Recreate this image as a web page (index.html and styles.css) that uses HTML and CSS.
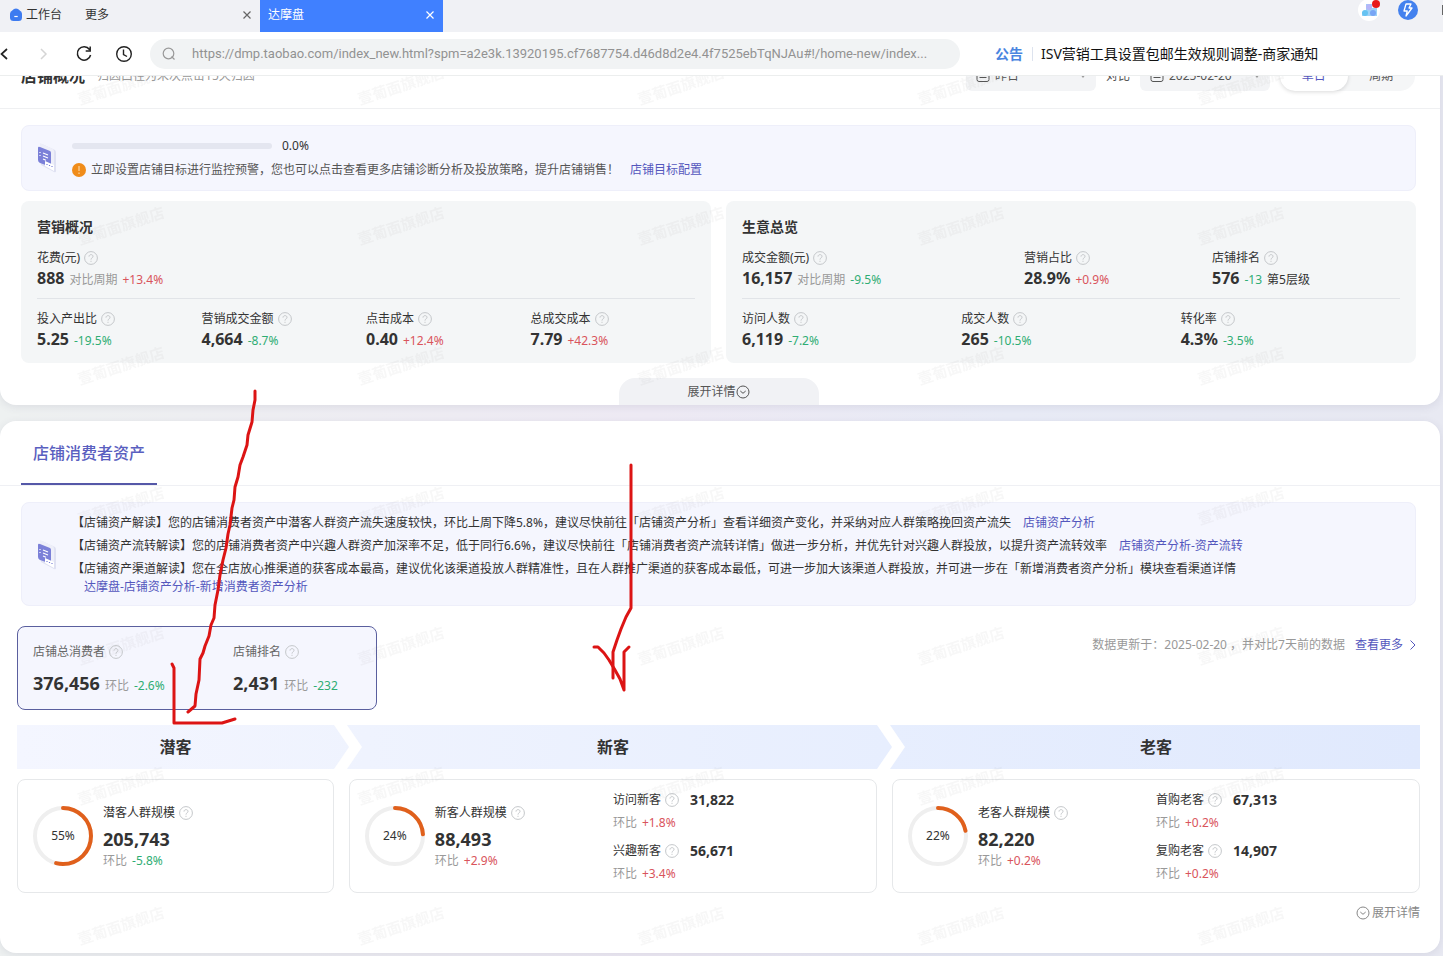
FILE: index.html
```html
<!DOCTYPE html>
<html lang="zh-CN">
<head>
<meta charset="utf-8">
<title>达摩盘</title>
<link rel="stylesheet" href="styles.css">
</head>
<body>
<svg class="defs" aria-hidden="true">
  <symbol id="help" viewBox="0 0 14 14"><circle cx="7" cy="7" r="6.4" fill="none" stroke="currentColor"/><path d="M5 5.6C5 3 9 3 9 5.4C9 6.9 7 6.8 7 8.6M7 9.8v1.1" fill="none" stroke="currentColor"/></symbol>
  <symbol id="down" viewBox="0 0 14 14"><circle cx="7" cy="7" r="6" fill="none" stroke="currentColor"/><path d="M4.3 6l2.7 2.3L9.700 6" fill="none" stroke="currentColor"/></symbol>
  <symbol id="close" viewBox="0 0 10 10"><path d="M1.500 1.500l7 7M8.500 1.500l-7 7" fill="none" stroke="currentColor" stroke-width="1.200"/></symbol>
  <symbol id="calendar" viewBox="0 0 14 14"><rect x="1" y="2" width="12" height="10.500" rx="2" fill="none" stroke="currentColor"/><path d="M3.500 5.500h7M3.500 8.500h7" stroke="currentColor"/></symbol>
  <symbol id="note" viewBox="0 0 20 30">
    <path d="M5 1L18 7Q19 8 19 10V28Q19 30 17 29L4 22Z" fill="#dfe1f2"/>
    <path d="M3 0L16 6Q17 7 17 9V26L3 20Z" fill="#eeeff9"/>
    <path d="M1 5Q1 3 3 4L13 8Q14 8.500 14 10V24L3 20Q1 19 1 17Z" fill="#7b80d8"/>
    <path d="M6 10l5 2M6 13l5 2M6 16l3 1.200M3 9v1M3 12v1" stroke="#fff" stroke-width="1.200" fill="none"/>
    <path d="M8 18L17 22V28L8 23Z" fill="#fff"/>
    <path d="M10 21v1M12.500 22v1M15 23v1" stroke="#7b80d8" stroke-width="1.200"/>
  </symbol>
</svg>

<header class="tabbar">
  <button class="home" type="button">
    <svg width="14" height="14" viewBox="0 0 14 14"><path d="M5 1Q7-.2 9 1L12 3.500Q13 4.500 13 6V9.500Q13 13 9.500 13H4.500Q1 13 1 9.500V6Q1 4.500 2 3.500Z" fill="#3d7bf0"/><path d="M5.300 8.500h3.400" stroke="#fff" stroke-width="1.200"/></svg>
    <span>工作台</span>
  </button>
  <div class="tab"><span>更多</span><button type="button" aria-label="关闭更多"><svg width="10" height="10"><use href="#close"/></svg></button></div>
  <div class="tab active"><span>达摩盘</span><button type="button" aria-label="关闭达摩盘"><svg width="10" height="10"><use href="#close"/></svg></button></div>
  <div class="tools">
    <button type="button" aria-label="应用"><svg width="22" height="24" viewBox="0 0 22 24"><circle cx="11" cy="10" r="11" fill="#fff"/><path d="M8 4h6v4h5v8H4v-4h4z" fill="#9ed2f7"/><circle cx="7" cy="13" r="3" fill="#66c3f2"/><circle cx="15" cy="13" r="3" fill="#78a5f5"/><circle cx="11" cy="7" r="3" fill="#b5b6f8"/><circle cx="18" cy="4" r="4" fill="#e81b1b"/></svg></button>
    <button type="button" aria-label="加速"><svg width="20" height="20" viewBox="0 0 20 20"><circle cx="10" cy="10" r="10" fill="#4381ee"/><path d="M8 4h5l-2 4h3l-6 8 1.200-5H6z" fill="none" stroke="#fff" stroke-width="1.300" stroke-linejoin="round"/></svg></button>
    <span class="window-edge"></span>
  </div>
</header>

<nav class="navbar">
  <div class="nav-buttons">
    <button type="button" aria-label="后退"><svg width="16" height="18" viewBox="0 0 16 18"><path d="M7 4L1.500 9L7 14" fill="none" stroke="#222" stroke-width="1.700"/></svg></button>
    <button type="button" aria-label="前进"><svg width="16" height="18" viewBox="0 0 16 18"><path d="M5 4l5 5-5 5" fill="none" stroke="#d5d5d5" stroke-width="1.500"/></svg></button>
    <button type="button" aria-label="刷新"><svg width="16" height="18" viewBox="0 0 16 18"><path d="M13.500 4.500A6.700 6.700 0 1 0 14.600 10M14.200 1.500V6H9.700" fill="none" stroke="#222" stroke-width="1.500"/></svg></button>
    <button type="button" aria-label="历史"><svg width="16" height="18" viewBox="0 0 16 18"><circle cx="8" cy="9" r="7.300" fill="none" stroke="#222" stroke-width="1.400"/><path d="M7.500 4.500V9.500L11 11.500" fill="none" stroke="#222" stroke-width="1.400"/></svg></button>
  </div>
  <label class="address">
    <svg width="14" height="14" viewBox="0 0 14 14"><circle cx="6.500" cy="6.500" r="5.300" fill="none" stroke="#999" stroke-width="1.200"/><path d="M9.500 9.500l3 3" stroke="#999" stroke-width="1.200"/></svg>
    <input type="text" aria-label="地址" value="https://dmp.taobao.com/index_new.html?spm=a2e3k.13920195.cf7687754.d46d8d2e4.4f7525ebTqNJAu#!/home-new/index...">
  </label>
  <div class="notice"><strong>公告</strong><a href="#">ISV营销工具设置包邮生效规则调整-商家通知</a></div>
</nav>

<main class="page">
  <section class="card overview">
    <div class="overview-head">
      <h2>店铺概况</h2>
      <span class="sub">归因口径为末次点击15天归因</span>
      <div class="filters">
        <label class="picker"><svg width="14" height="14"><use href="#calendar"/></svg><select aria-label="日期"><option>昨日</option></select><svg width="6" height="4" viewBox="0 0 6 4"><path d="M0 0h6L3 4z" fill="#999"/></svg></label>
        <span>对比</span>
        <label class="picker"><svg width="14" height="14"><use href="#calendar"/></svg><input type="text" aria-label="对比日期" value="2025-02-20"><svg width="6" height="4" viewBox="0 0 6 4"><path d="M0 0h6L3 4z" fill="#999"/></svg></label>
        <div class="segmented"><button type="button" class="on">单日</button><button type="button">周期</button></div>
      </div>
    </div>
    <div class="overview-body">
      <div class="tip">
        <svg class="note" width="20" height="30"><use href="#note"/></svg>
        <div class="goal">
          <div class="goal-bar"><span class="track"></span><span>0.0%</span></div>
          <p><svg width="14" height="14" viewBox="0 0 14 14"><circle cx="7" cy="7" r="7" fill="#f08c1a"/><path d="M7 3v5M7 9.500v1.500" stroke="#fbd5a0" stroke-width="1.200"/></svg><span>立即设置店铺目标进行监控预警，您也可以点击查看更多店铺诊断分析及投放策略，提升店铺销售！</span><a href="#">店铺目标配置</a></p>
        </div>
      </div>
      <div class="panels">
        <article class="panel">
          <h3>营销概况</h3>
          <div class="row upper one">
            <div><div class="label">花费(元)<svg class="help"><use href="#help"/></svg></div><div class="value"><b>888</b><i>对比周期</i><em class="up">+13.4%</em></div></div>
          </div>
          <div class="row four">
            <div><div class="label">投入产出比<svg class="help"><use href="#help"/></svg></div><div class="value"><b>5.25</b><em class="down">-19.5%</em></div></div>
            <div><div class="label">营销成交金额<svg class="help"><use href="#help"/></svg></div><div class="value"><b>4,664</b><em class="down">-8.7%</em></div></div>
            <div><div class="label">点击成本<svg class="help"><use href="#help"/></svg></div><div class="value"><b>0.40</b><em class="up">+12.4%</em></div></div>
            <div><div class="label">总成交成本<svg class="help"><use href="#help"/></svg></div><div class="value"><b>7.79</b><em class="up">+42.3%</em></div></div>
          </div>
        </article>
        <article class="panel">
          <h3>生意总览</h3>
          <div class="row upper wide-first">
            <div><div class="label">成交金额(元)<svg class="help"><use href="#help"/></svg></div><div class="value"><b>16,157</b><i>对比周期</i><em class="down">-9.5%</em></div></div>
            <div><div class="label">营销占比<svg class="help"><use href="#help"/></svg></div><div class="value"><b>28.9%</b><em class="up">+0.9%</em></div></div>
            <div><div class="label">店铺排名<svg class="help"><use href="#help"/></svg></div><div class="value"><b>576</b><em class="down">-13</em><span>第5层级</span></div></div>
          </div>
          <div class="row three">
            <div><div class="label">访问人数<svg class="help"><use href="#help"/></svg></div><div class="value"><b>6,119</b><em class="down">-7.2%</em></div></div>
            <div><div class="label">成交人数<svg class="help"><use href="#help"/></svg></div><div class="value"><b>265</b><em class="down">-10.5%</em></div></div>
            <div><div class="label">转化率<svg class="help"><use href="#help"/></svg></div><div class="value"><b>4.3%</b><em class="down">-3.5%</em></div></div>
          </div>
        </article>
      </div>
      <button class="expand" type="button">展开详情<svg width="14" height="14"><use href="#down"/></svg></button>
    </div>
  </section>

  <section class="card assets">
    <div class="assets-tabs"><button type="button">店铺消费者资产</button></div>
    <div class="tip insight">
      <svg class="note" width="20" height="30"><use href="#note"/></svg>
      <div class="insight-text">
        <p>【店铺资产解读】您的店铺消费者资产中潜客人群资产流失速度较快，环比上周下降5.8%，建议尽快前往「店铺资产分析」查看详细资产变化，并采纳对应人群策略挽回资产流失<a href="#">店铺资产分析</a></p>
        <p>【店铺资产流转解读】您的店铺消费者资产中兴趣人群资产加深率不足，低于同行6.6%，建议尽快前往「店铺消费者资产流转详情」做进一步分析，并优先针对兴趣人群投放，以提升资产流转效率<a href="#">店铺资产分析-资产流转</a></p>
        <p>【店铺资产渠道解读】您在全店放心推渠道的获客成本最高，建议优化该渠道投放人群精准性，且在人群推广渠道的获客成本最低，可进一步加大该渠道人群投放，并可进一步在「新增消费者资产分析」模块查看渠道详情<a href="#">达摩盘-店铺资产分析-新增消费者资产分析</a></p>
      </div>
    </div>
    <div class="summary">
      <div class="total">
        <div><div class="label">店铺总消费者<svg class="help"><use href="#help"/></svg></div><div class="value"><b>376,456</b><i>环比</i><em class="down">-2.6%</em></div></div>
        <div><div class="label">店铺排名<svg class="help"><use href="#help"/></svg></div><div class="value"><b>2,431</b><i>环比</i><em class="down">-232</em></div></div>
      </div>
      <div class="updated"><span>数据更新于：2025-02-20 ，并对比7天前的数据</span><a href="#">查看更多<svg width="8" height="12" viewBox="0 0 8 12"><path d="M1.500 1.500L6 6l-4.500 4.500" fill="none" stroke="currentColor"/></svg></a></div>
    </div>
    <div class="stages">
      <h3>潜客</h3>
      <h3><svg class="chevron" viewBox="0 0 28 44"><path d="M0 0H13L28 22L13 44H0L15 22Z" fill="#fff"/></svg>新客</h3>
      <h3><svg class="chevron" viewBox="0 0 28 44"><path d="M0 0H13L28 22L13 44H0L15 22Z" fill="#fff"/></svg>老客</h3>
    </div>
    <div class="groups">
      <article class="group">
        <div class="main-stat">
          <div class="ring"><svg viewBox="0 0 60 60"><circle cx="30" cy="30" r="28"/><circle class="arc" cx="30" cy="30" r="28" pathLength="100" stroke-dasharray="54 100"/></svg><span>55%</span></div>
          <div><div class="label">潜客人群规模<svg class="help"><use href="#help"/></svg></div><b>205,743</b><div class="ratio"><i>环比</i><em class="down">-5.8%</em></div></div>
        </div>
      </article>
      <article class="group">
        <div class="main-stat">
          <div class="ring"><svg viewBox="0 0 60 60"><circle cx="30" cy="30" r="28"/><circle class="arc" cx="30" cy="30" r="28" pathLength="100" stroke-dasharray="24 100"/></svg><span>24%</span></div>
          <div><div class="label">新客人群规模<svg class="help"><use href="#help"/></svg></div><b>88,493</b><div class="ratio"><i>环比</i><em class="up">+2.9%</em></div></div>
        </div>
        <div class="detail">
          <div><div class="label">访问新客<svg class="help"><use href="#help"/></svg><b>31,822</b></div><div class="ratio"><i>环比</i><em class="up">+1.8%</em></div></div>
          <div><div class="label">兴趣新客<svg class="help"><use href="#help"/></svg><b>56,671</b></div><div class="ratio"><i>环比</i><em class="up">+3.4%</em></div></div>
        </div>
      </article>
      <article class="group">
        <div class="main-stat">
          <div class="ring"><svg viewBox="0 0 60 60"><circle cx="30" cy="30" r="28"/><circle class="arc" cx="30" cy="30" r="28" pathLength="100" stroke-dasharray="22 100"/></svg><span>22%</span></div>
          <div><div class="label">老客人群规模<svg class="help"><use href="#help"/></svg></div><b>82,220</b><div class="ratio"><i>环比</i><em class="up">+0.2%</em></div></div>
        </div>
        <div class="detail">
          <div><div class="label">首购老客<svg class="help"><use href="#help"/></svg><b>67,313</b></div><div class="ratio"><i>环比</i><em class="up">+0.2%</em></div></div>
          <div><div class="label">复购老客<svg class="help"><use href="#help"/></svg><b>14,907</b></div><div class="ratio"><i>环比</i><em class="up">+0.2%</em></div></div>
        </div>
      </article>
    </div>
    <button class="more" type="button"><svg width="14" height="14"><use href="#down"/></svg>展开详情</button>
  </section>

  <svg class="watermark" aria-hidden="true">
    <defs><pattern id="wm" y="-20" width="280" height="140" patternUnits="userSpaceOnUse"><text x="80" y="49" transform="rotate(-18 80 49)">壹葡面旗舰店</text></pattern></defs>
    <rect width="100%" height="100%" fill="url(#wm)"/>
  </svg>
</main>

<svg class="marks" width="760" height="760" viewBox="0 0 760 760" aria-hidden="true">
  <path d="M255 391L255 400L253 410L252 422L248 435L247 445L243 457L240 465L238 477L235 487L234 500L232 508L230 525L228 534L226 548L223 560L220 575L218 590L215 605L214 618L211 625L209 636L205 646L203 653L200 659L199 680L196 694L195 706L188 712"/>
  <path d="M172 664L174 668V723H222L235 719"/>
  <path d="M631 465V608L626 617L621 629L617 640L613 652V678"/>
  <path d="M594 647L598 647L604 653L609 660L615 670L620 679L624 690V652L629 647"/>
</svg>
</body>
</html>
```
FILE: styles.css
```css
* { box-sizing: border-box; }
body {
  margin: 0;
  height: 100vh;
  display: flex;
  flex-direction: column;
  overflow: hidden;
  position: relative;
  font: 12px/20px "Noto Sans", "Noto Sans CJK SC", sans-serif;
  color: #333;
  background: #fff;
}
h2, h3, p { margin: 0; }
button, input, select { font: inherit; color: inherit; background: none; border: 0; padding: 0; margin: 0; }
a { color: #5457bd; text-decoration: none; }
i, em { font-style: normal; }
svg { flex: none; display: block; }
.defs { position: absolute; width: 0; height: 0; }

.tabbar { display: flex; flex: none; height: 32px; background: #f0f1f5; }
.home { display: flex; align-items: center; gap: 3px; width: 77px; padding: 0 0 2px 9px; color: #333; }
.tab { display: flex; align-items: center; justify-content: space-between; width: 183px; padding: 0 8px 2px; color: #333; }
.tab button { color: #666; }
.tab.active { background: #4080ff; color: #fff; }
.tab.active button { color: #fff; }
.tools { display: flex; gap: 18px; margin-left: auto; align-items: flex-start; }
.window-edge { width: 1px; height: 10px; margin: 5px 0 0 6px; background: #666; }

.navbar { display: flex; flex: none; align-items: center; height: 44px; border-bottom: 1px solid #eceeee; }
.nav-buttons { display: flex; gap: 24px; width: 150px; }
.nav-buttons button:first-child { margin-right: -4px; }
.address { display: flex; align-items: center; gap: 16px; flex: 0 1 810px; height: 30px; padding: 0 12px; border-radius: 15px; background: #f1f3f4; }
.address input { flex: 1; min-width: 0; font-family: Roboto, sans-serif; font-size: 13px; color: #929292; }
.notice { display: flex; align-items: center; margin-left: 35px; font-size: 14px; white-space: nowrap; }
.notice strong { color: #4a85e0; padding-right: 9px; margin-right: 8px; border-right: 1px solid #dde3ee; line-height: 14px; }
.notice a { color: #111; }

.page {
  position: relative;
  flex: 1;
  min-height: 0;
  overflow: hidden;
  padding-right: 3px;
  background: linear-gradient(90deg, #eef1f1, #eeeaf4 45%, #e8ebf6 70%, #e8e9f2);
}
.card { background: #fff; border-radius: 16px; box-shadow: 0 2px 8px rgba(60, 60, 100, 0.1); }
.overview { margin-top: -32px; margin-bottom: 16px; }
.overview-head { display: flex; align-items: center; height: 65px; padding: 0 25px 0 21px; border-bottom: 1px solid #eff0f2; }
.overview-head h2 { font-size: 16px; }
.sub { margin-left: 12px; color: #999; }
.filters { display: flex; align-items: center; gap: 10px; margin-left: auto; color: #555; }
.picker { display: flex; align-items: center; gap: 5px; width: 130px; height: 30px; padding: 0 10px; border-radius: 6px; background: #f3f4f6; }
.picker select, .picker input { flex: 1; min-width: 0; appearance: none; }
.segmented { display: flex; width: 135px; height: 30px; border-radius: 15px; background: #f5f6f7; }
.segmented button { flex: 1; border-radius: 15px; }
.segmented .on { background: #fff; color: #5457bd; box-shadow: 0 1px 4px rgba(0, 0, 0, 0.15); }
.overview-body { padding: 16px 24px 0 21px; }

.tip { display: flex; align-items: center; gap: 15px; padding: 8px 15px; border: 1px solid #eeeffa; border-radius: 8px; background: #f5f6fe; }
.goal-bar { display: flex; align-items: center; gap: 10px; height: 24px; }
.track { width: 200px; height: 6px; border-radius: 3px; background: #e4e6f0; }
.goal p { display: flex; align-items: center; gap: 5px; height: 24px; color: #555; }
.goal p a { margin-left: 6px; }

.panels { display: grid; grid-template-columns: 1fr 1fr; gap: 15px; margin-top: 10px; }
.panel { padding: 16px 16px 14px; border-radius: 8px; background: #f4f6f7; }
.panel h3 { font-size: 14px; margin-bottom: 11px; }
.row { display: grid; }
.upper { padding-bottom: 10px; margin-bottom: 10px; border-bottom: 1px solid #e1e4e8; }
.four { grid-template-columns: repeat(4, 1fr); }
.three { grid-template-columns: repeat(3, 1fr); }
.wide-first { grid-template-columns: 3fr 2fr 2fr; }
.label { display: flex; align-items: center; gap: 4px; height: 20px; }
.help { width: 14px; height: 14px; color: #c4c7ca; }
.value { display: flex; align-items: baseline; gap: 5px; height: 20px; white-space: nowrap; }
.value b { font-size: 16px; }
i { color: #999; }
.up { color: #d9545c; }
.down { color: #2fad73; }
.expand { display: flex; align-items: center; justify-content: center; width: 200px; height: 27px; margin: 15px auto 0; border-radius: 16px 16px 0 0; background: #f1f2f5; color: #555; }

.assets { padding-bottom: 30px; }
.assets-tabs { height: 65px; padding-left: 21px; border-bottom: 1px solid #eff0f4; }
.assets-tabs button { height: 64px; padding: 2px 12px 0; font-size: 16px; font-weight: 500; color: #5a5fc0; border-bottom: 2px solid #5558a8; }
.insight { margin: 16px 24px 20px 21px; padding: 11px 15px 9px; }
.insight-text { display: grid; gap: 5px; line-height: 18px; }
.insight-text a { display: inline-block; margin-left: 12px; }
.summary { display: flex; justify-content: space-between; align-items: flex-start; margin: 0 20px 15px 17px; }
.total { display: grid; grid-template-columns: 200px 127px; padding: 15px 16px 14px 15px; border: 1px solid #5a5f9e; border-radius: 8px; background: #f5f6fe; }
.total .label { color: #666; }
.total .value { height: 24px; margin-top: 9px; line-height: 24px; }
.total b, .main-stat b { font-size: 18px; }
.updated { display: flex; gap: 10px; padding: 9px 3px 0 0; color: #999; }
.updated a { display: flex; align-items: center; gap: 6px; }

.stages, .groups { display: grid; grid-template-columns: 3fr 5fr 5fr; gap: 15px; margin: 0 20px 10px 17px; }
.stages { background: linear-gradient(90deg, #f4f6ff, #eff3fe 25%, #e7eefe 62%, #e0e9fd); }
.stages h3 { position: relative; font-size: 16px; font-weight: 700; line-height: 44px; text-align: center; }
.chevron { position: absolute; left: -15px; top: 0; width: 28px; height: 44px; }
.group { display: grid; grid-template-columns: 1fr 1fr; align-items: center; min-height: 114px; border: 1px solid #e6e8ea; border-radius: 8px; }
.group:first-child { grid-template-columns: 1fr; }
.main-stat { display: flex; align-items: center; gap: 10px; padding-left: 15px; }
.main-stat b { display: block; line-height: 26px; margin-top: 3px; }
.main-stat .ratio { line-height: 18px; }
.ring { position: relative; width: 60px; height: 60px; display: grid; place-items: center; }
.ring svg { position: absolute; inset: 0; transform: rotate(-90deg); }
.ring circle { fill: none; stroke: #efefef; stroke-width: 4; }
.ring .arc { stroke: #e0601c; stroke-linecap: round; }
.ratio { display: flex; gap: 5px; }
.detail { display: grid; gap: 5px; }
.detail .label { height: 24px; }
.detail .ratio { line-height: 22px; }
.detail b { font-size: 14px; margin-left: 7px; }
.more { display: flex; align-items: center; gap: 2px; margin: 0 20px 0 auto; color: #888; }

.watermark { position: absolute; inset: 0; width: 100%; height: 100%; pointer-events: none; }
.watermark text { font-size: 15px; font-weight: 700; fill: rgba(90, 90, 90, 0.05); }
.marks { position: absolute; left: 0; top: 0; pointer-events: none; }
.marks path { fill: none; stroke: #dc1414; stroke-width: 3; stroke-linecap: round; stroke-linejoin: round; }
```
